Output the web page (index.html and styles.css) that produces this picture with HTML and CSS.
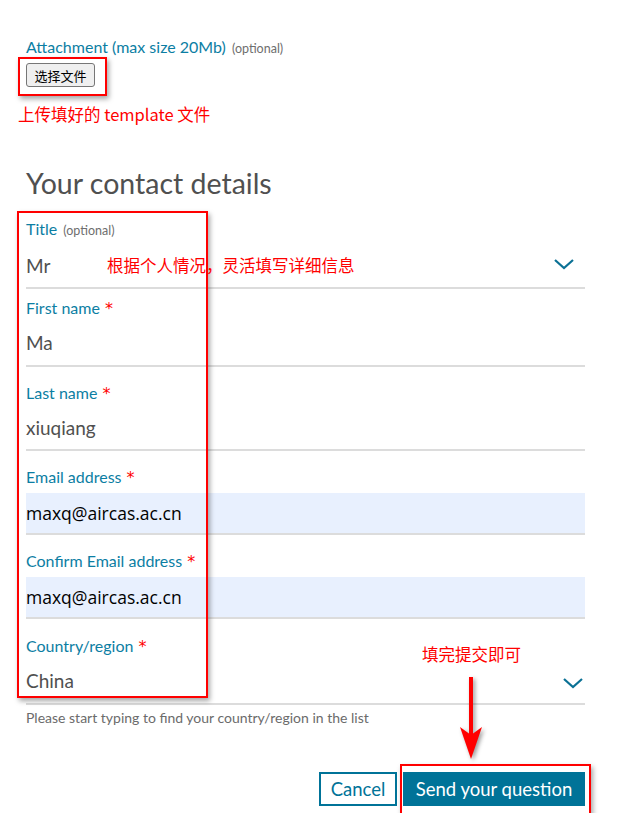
FILE: index.html
```html
<!DOCTYPE html>
<html lang="en">
<head>
<meta charset="utf-8">
<link rel="stylesheet" href="styles.css">
</head>
<body>
<div class="page">
  <div class="attach">
    <div class="label">Attachment (max size 20Mb) <span class="opt">(optional)</span></div>
    <button class="file-btn" type="button">选择文件</button>
  </div>
  <div class="note note-upload">上传填好的 template 文件</div>

  <h2 class="heading">Your contact details</h2>

  <div class="field field-first">
    <div class="label">Title <span class="opt">(optional)</span></div>
    <div class="input select">
      <span class="value">Mr</span>
      <svg class="chev" width="20" height="11" viewBox="0 0 20 11"><path d="M1 1 L10 9 L19 1" fill="none" stroke="#0b7195" stroke-width="2.2"/></svg>
    </div>
  </div>
  <div class="field field-tight">
    <div class="label">First name <span class="req">*</span></div>
    <div class="input"><span class="value">Ma</span></div>
  </div>
  <div class="field">
    <div class="label">Last name <span class="req">*</span></div>
    <div class="input"><span class="value">xiuqiang</span></div>
  </div>
  <div class="field">
    <div class="label">Email address <span class="req">*</span></div>
    <div class="input filled"><span class="value auto">maxq@aircas.ac.cn</span></div>
  </div>
  <div class="field">
    <div class="label">Confirm Email address <span class="req">*</span></div>
    <div class="input filled"><span class="value auto">maxq@aircas.ac.cn</span></div>
  </div>
  <div class="field field-country">
    <div class="label">Country/region <span class="req">*</span></div>
    <div class="input select">
      <span class="value">China</span>
      <svg class="chev chev-low" width="20" height="11" viewBox="0 0 20 11"><path d="M1 1 L10 9 L19 1" fill="none" stroke="#0b7195" stroke-width="2.2"/></svg>
    </div>
    <div class="help">Please start typing to find your country/region in the list</div>
  </div>

  <div class="actions">
    <button class="btn btn-cancel" type="button">Cancel</button>
    <button class="btn btn-send" type="button">Send your question</button>
  </div>

  <div class="box box-file"></div>
  <div class="box box-fields"></div>
  <div class="box box-send"></div>
  <div class="note note-detail">根据个人情况，灵活填写详细信息</div>
  <div class="note note-submit">填完提交即可</div>
  <svg class="arrow" width="30" height="86" viewBox="0 0 30 86">
    <rect x="13" y="0" width="4" height="60" fill="#ff0000"/>
    <path d="M4 50 L15 58 L26 50 L15 82 Z" fill="#ff0000"/>
  </svg>
</div>
</body>
</html>
```
FILE: styles.css
```css
html {
  overflow: hidden;
}
html, body {
  margin: 0;
  padding: 0;
  background: #ffffff;
}
body {
  font-family: "Lato", "Noto Sans CJK SC", sans-serif;
  color: #505050;
}
.page {
  position: relative;
  box-sizing: border-box;
  width: 631px;
  height: 813px;
  padding: 37px 46px 0 26px;
}
.label {
  height: 20px;
  font-size: 16px;
  line-height: 20px;
  color: #0c7ea3;
}
.opt {
  font-size: 12.5px;
  color: #6e6e6e;
  margin-left: 2px;
}
.req {
  color: #ff0000;
  font-family: "DejaVu Sans", sans-serif;
  font-size: 16px;
  line-height: 1;
  margin-left: 1px;
}
.file-btn {
  margin-top: 6px;
  height: 24px;
  width: 69px;
  padding: 0;
  font-family: "Noto Sans CJK SC", sans-serif;
  font-size: 13px;
  color: #000;
  background: #efefef;
  border: 1px solid #767676;
  border-radius: 3px;
}
.note {
  color: #ff0000;
  font-family: "Noto Sans CJK SC", "Lato", sans-serif;
  font-size: 16.5px;
  line-height: 20px;
  white-space: nowrap;
}
.note-upload {
  margin: 17px 0 0 -8px;
}
.heading {
  margin: 41px 0 0 0;
  font-weight: 400;
  font-size: 28.5px;
  line-height: 36px;
  color: #505050;
}
.field {
  margin-top: 16px;
}
.field-first {
  margin-top: 18px;
}
.field-first .input {
  margin-top: 8px;
}
.field-tight {
  margin-top: 9px;
}
.field-tight .input {
  height: 41px;
}
.field-country {
  margin-top: 17px;
}
.input {
  box-sizing: border-box;
  display: flex;
  align-items: center;
  justify-content: space-between;
  height: 42px;
  margin-top: 6px;
  padding-bottom: 4px;
  border-bottom: 2px solid #dcdcdc;
}
.field-tight .input,
.field-country .input {
  height: 43px;
}
.input.filled {
  padding-bottom: 0;
  background: #e8f0fe;
}
.value {
  font-size: 19px;
  color: #505050;
}
.value.auto {
  color: #000;
  font-family: "Open Sans", sans-serif;
  font-size: 17.5px;
}
.chev {
  margin-right: 11px;
  margin-top: -2px;
}
.chev-low {
  margin-right: 2px;
  margin-top: 6px;
}
.help {
  margin-top: 4px;
  font-size: 14px;
  line-height: 18px;
  color: #6b6b6b;
}
.actions {
  display: flex;
  justify-content: flex-end;
  gap: 6px;
  margin-top: 45px;
}
.btn {
  height: 34px;
  font-family: "Lato", sans-serif;
  font-size: 18.5px;
  padding: 0;
  border-radius: 0;
  white-space: nowrap;
}
.btn-cancel {
  border: 2px solid #007398;
  background: #fff;
  color: #007398;
  width: 78px;
}
.btn-send {
  border: none;
  background: #007398;
  color: #fff;
  width: 182px;
}
.box {
  position: absolute;
  border: 2px solid #ff0000;
  box-shadow: 2px 3px 5px rgba(0, 0, 0, 0.35);
}
.box-file {
  left: 18px;
  top: 57px;
  width: 85px;
  height: 35px;
}
.box-fields {
  left: 17px;
  top: 211px;
  width: 187px;
  height: 483px;
}
.box-send {
  left: 400px;
  top: 764px;
  width: 187px;
  height: 60px;
}
.note-detail {
  position: absolute;
  left: 107px;
  top: 255px;
}
.note-submit {
  position: absolute;
  left: 422px;
  top: 644px;
}
.arrow {
  position: absolute;
  left: 456px;
  top: 677px;
  filter: drop-shadow(2px 2px 2px rgba(0, 0, 0, 0.4));
}
```
